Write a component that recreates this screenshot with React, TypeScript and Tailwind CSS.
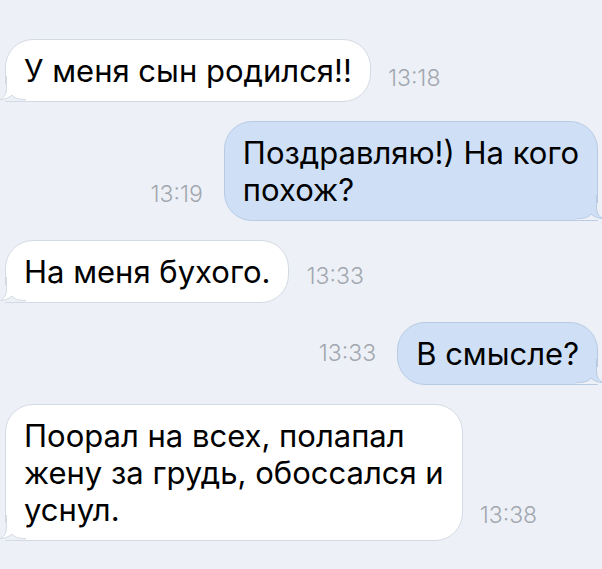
import React from "react";

type Msg = { out: boolean; lines: string[]; time: string; timeMb: string };

const msgs: Msg[] = [
  { out: false, lines: ["У меня сын родился!!"], time: "13:18", timeMb: "mb-[11px]" },
  { out: true, lines: ["Поздравляю!) На кого", "похож?"], time: "13:19", timeMb: "mb-[14px]" },
  { out: false, lines: ["На меня бухого."], time: "13:33", timeMb: "mb-[14px]" },
  { out: true, lines: ["В смысле?"], time: "13:33", timeMb: "mb-[19px]" },
  { out: false, lines: ["Поорал на всех, полапал", "жену за грудь, обоссался и", "уснул."], time: "13:38", timeMb: "mb-[13px]" },
];

function Tail({ out }: { out: boolean }) {
  const fill = out ? "#cfe0f6" : "#ffffff";
  const stroke = out ? "#b8cbe3" : "#d4dae3";
  const d = "M6.5 0 L6.5 12 C6.5 18 4 21.5 0.5 23.5 C5 23.5 9 21.5 12 19 C14 22 18 23.5 26 23.5";
  return (
    <svg
      width="26"
      height="25"
      viewBox="0 0 26 25"
      className={`absolute bottom-0 ${out ? "right-[-6px] -scale-x-100" : "left-[-6px]"}`}
    >
      <rect x="0" y="8" width="26" height="17" fill="#edf1f7" />
      <path d={d + " L26 0 Z"} fill={fill} />
      <path d={d} fill="none" stroke={stroke} strokeWidth="1" />
    </svg>
  );
}

function Bubble({ m }: { m: Msg }) {
  return (
    <div
      className={`relative rounded-[28px] border px-[18px] py-[12px] text-[31px] leading-[37px] text-black ${
        m.out
          ? "bg-[#cfe0f6] border-[#b8cbe3] rounded-br-none"
          : "bg-white border-[#d4dae3] rounded-bl-none"
      }`}
    >
      {m.lines.map((l, i) => (
        <div key={i} className="whitespace-nowrap">{l}</div>
      ))}
      <Tail out={m.out} />
    </div>
  );
}

export default function App() {
  return (
    <div
      className="w-[602px] h-[569px] bg-[#edf1f7] overflow-hidden pt-[39px] flex flex-col gap-[19px]"
      style={{ fontFamily: 'Inter, "Liberation Sans", sans-serif' }}
    >
      {msgs.map((m, i) => (
        <div
          key={i}
          className={`flex items-end ${m.out ? "justify-end pr-[4px] gap-[21px]" : "pl-[5px] gap-[17px]"}`}
        >
          {m.out && (
            <span className={`text-[23px] leading-[26px] font-light text-[#a2a7af] ${m.timeMb}`}>{m.time}</span>
          )}
          <Bubble m={m} />
          {!m.out && (
            <span className={`text-[23px] leading-[26px] font-light text-[#a2a7af] ${m.timeMb}`}>{m.time}</span>
          )}
        </div>
      ))}
    </div>
  );
}
